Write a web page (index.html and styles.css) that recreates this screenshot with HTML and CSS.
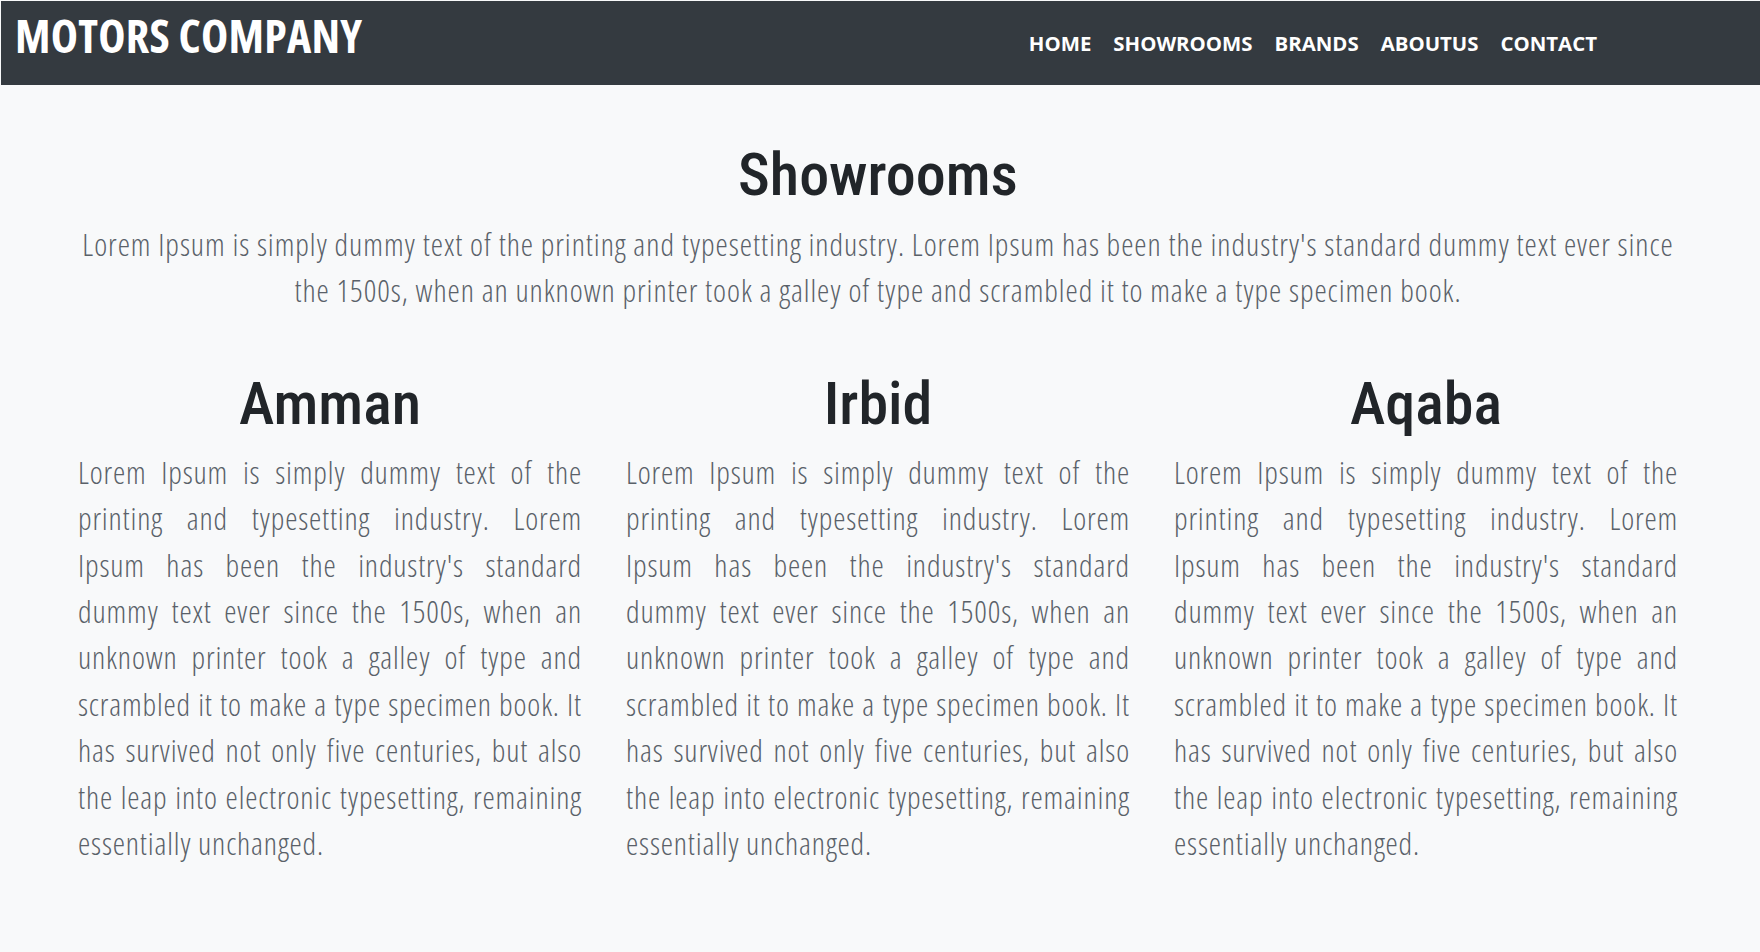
FILE: index.html
```html
<!DOCTYPE html>
<html lang="en">
<head>
<meta charset="utf-8">
<title>Motors Company - Showrooms</title>
<link rel="stylesheet" href="styles.css">
</head>
<body>
<header class="navbar">
  <a class="brand" href="#">MOTORS COMPANY</a>
  <nav class="nav-links">
    <a href="#">HOME</a>
    <a href="#">SHOWROOMS</a>
    <a href="#">BRANDS</a>
    <a href="#">ABOUTUS</a>
    <a href="#">CONTACT</a>
  </nav>
</header>
<main class="page">
  <section class="intro">
    <h1 class="title">Showrooms</h1>
    <p class="lead">Lorem Ipsum is simply dummy text of the printing and typesetting industry. Lorem Ipsum has been the industry's standard dummy text ever since the 1500s, when an unknown printer took a galley of type and scrambled it to make a type specimen book.</p>
  </section>
  <section class="showrooms">
    <article class="showroom">
      <h2 class="showroom-name">Amman</h2>
      <p class="showroom-text">Lorem Ipsum is simply dummy text of the printing and typesetting industry. Lorem Ipsum has been the industry's standard dummy text ever since the 1500s, when an unknown printer took a galley of type and scrambled it to make a type specimen book. It has survived not only five centuries, but also the leap into electronic typesetting, remaining essentially unchanged.</p>
    </article>
    <article class="showroom">
      <h2 class="showroom-name">Irbid</h2>
      <p class="showroom-text">Lorem Ipsum is simply dummy text of the printing and typesetting industry. Lorem Ipsum has been the industry's standard dummy text ever since the 1500s, when an unknown printer took a galley of type and scrambled it to make a type specimen book. It has survived not only five centuries, but also the leap into electronic typesetting, remaining essentially unchanged.</p>
    </article>
    <article class="showroom">
      <h2 class="showroom-name">Aqaba</h2>
      <p class="showroom-text">Lorem Ipsum is simply dummy text of the printing and typesetting industry. Lorem Ipsum has been the industry's standard dummy text ever since the 1500s, when an unknown printer took a galley of type and scrambled it to make a type specimen book. It has survived not only five centuries, but also the leap into electronic typesetting, remaining essentially unchanged.</p>
    </article>
  </section>
</main>
</body>
</html>
```
FILE: styles.css
```css
html {
  background: #f8f9fa;
}

body {
  margin: 0;
  padding: 1px 0 0 1px;
  min-height: 951px;
  background: #f8f9fa;
  font-family: "Open Sans", "Noto Sans", sans-serif;
  color: #212529;
}

/* ---------- navbar ---------- */
.navbar {
  display: flex;
  align-items: flex-start;
  height: 84px;
  padding-left: 14px;
  background: #343a40;
  box-sizing: border-box;
}

.brand {
  margin-top: 11px;
  font-family: "Open Sans", sans-serif;
  font-stretch: 87.5%;
  font-weight: 700;
  font-size: 46px;
  line-height: 46px;
  letter-spacing: 0.25px;
  color: #ffffff;
  text-decoration: none;
  white-space: nowrap;
}

.nav-links {
  display: flex;
  gap: 22px;
  margin-left: auto;
  margin-top: 32px;
  padding-right: 163px;
}

.nav-links a {
  font-family: "Open Sans", sans-serif;
  font-weight: 700;
  font-size: 20.4px;
  line-height: 20px;
  color: #ffffff;
  text-decoration: none;
  white-space: nowrap;
}

/* ---------- content ---------- */
.page {
  padding: 0 82px 0 77px;
}

.intro {
  text-align: center;
}

.title {
  margin: 54px 0 10px;
  font-family: Roboto, sans-serif;
  font-stretch: 87.5%;
  font-weight: 500;
  font-size: 60px;
  line-height: 72px;
  color: #212529;
}

.lead,
.showroom-text {
  margin: 0;
  font-family: "Open Sans", sans-serif;
  font-stretch: 87.5%;
  font-weight: 300;
  font-size: 31px;
  line-height: 46.4px;
  color: #5a6169;
}

.lead {
  letter-spacing: 0.95px;
}

.showrooms {
  display: grid;
  grid-template-columns: repeat(3, 1fr);
  column-gap: 44px;
  margin-top: 54px;
}

.showroom-name {
  margin: 0 0 9px;
  text-align: center;
  font-family: Roboto, sans-serif;
  font-stretch: 87.5%;
  font-weight: 500;
  font-size: 60px;
  line-height: 72px;
  color: #212529;
}

.showroom-text {
  letter-spacing: 0.83px;
  text-align: justify;
}
```
